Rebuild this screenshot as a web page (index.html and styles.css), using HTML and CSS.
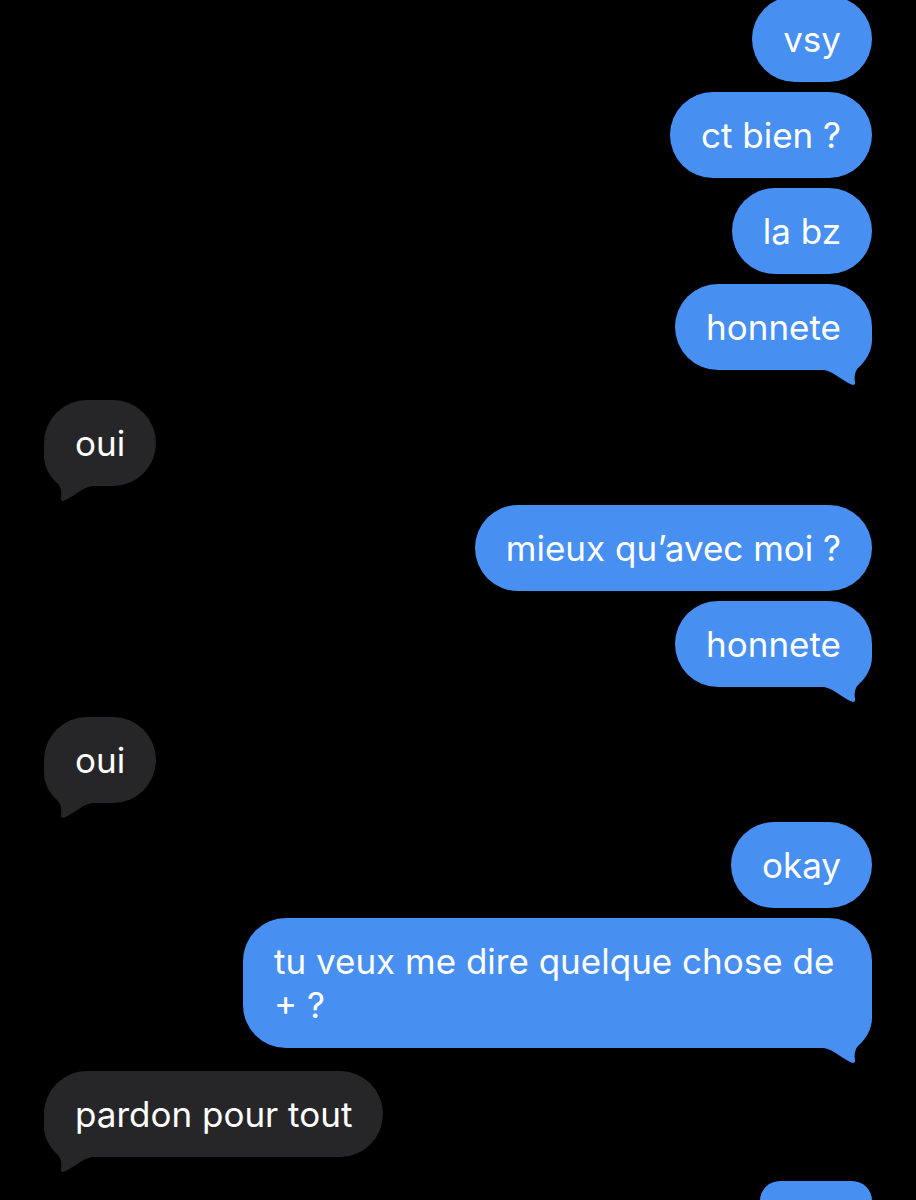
FILE: index.html
```html
<!DOCTYPE html>
<html lang="fr">
<head>
  <meta charset="UTF-8"/>
  <meta name="viewport" content="width=device-width,initial-scale=1.0"/>
  <title>Messages</title>
  <link rel="stylesheet" href="styles.css">
</head>
<body>
  <div class="thread">
    <div class="msg out first"><p class="bubble">vsy</p></div>
    <div class="msg out"><p class="bubble">ct bien ?</p></div>
    <div class="msg out"><p class="bubble">la bz</p></div>
    <div class="msg out"><p class="bubble">honnete<svg class="tail" viewBox="0 0 50 61"><path d="M50 0 L50 13 C50 24 44 34 36 41 C33 44 32 50 33 55 C33.5 57.5 31.5 58.5 29.5 57.5 C21 54 12 45 2 43 L2 0 Z"/></svg></p></div>

    <div class="msg in wide"><p class="bubble">oui<svg class="tail" viewBox="0 0 50 61"><path d="M50 0 L50 13 C50 24 44 34 36 41 C33 44 32 50 33 55 C33.5 57.5 31.5 58.5 29.5 57.5 C21 54 12 45 2 43 L2 0 Z"/></svg></p></div>

    <div class="msg out mid"><p class="bubble">mieux qu’avec moi ?</p></div>
    <div class="msg out"><p class="bubble">honnete<svg class="tail" viewBox="0 0 50 61"><path d="M50 0 L50 13 C50 24 44 34 36 41 C33 44 32 50 33 55 C33.5 57.5 31.5 58.5 29.5 57.5 C21 54 12 45 2 43 L2 0 Z"/></svg></p></div>

    <div class="msg in wide"><p class="bubble">oui<svg class="tail" viewBox="0 0 50 61"><path d="M50 0 L50 13 C50 24 44 34 36 41 C33 44 32 50 33 55 C33.5 57.5 31.5 58.5 29.5 57.5 C21 54 12 45 2 43 L2 0 Z"/></svg></p></div>

    <div class="msg out mid"><p class="bubble">okay</p></div>
    <div class="msg out"><p class="bubble long">tu veux me dire quelque chose de + ?<svg class="tail" viewBox="0 0 50 61"><path d="M50 0 L50 13 C50 24 44 34 36 41 C33 44 32 50 33 55 C33.5 57.5 31.5 58.5 29.5 57.5 C21 54 12 45 2 43 L2 0 Z"/></svg></p></div>

    <div class="msg in gap22"><p class="bubble">pardon pour tout<svg class="tail" viewBox="0 0 50 61"><path d="M50 0 L50 13 C50 24 44 34 36 41 C33 44 32 50 33 55 C33.5 57.5 31.5 58.5 29.5 57.5 C21 54 12 45 2 43 L2 0 Z"/></svg></p></div>

    <div class="msg out gap24"><p class="bubble next"></p></div>
  </div>
</body>
</html>
```

FILE: styles.css
```css
*{margin:0;padding:0;box-sizing:border-box;}
html,body{background:#000;height:100%;overflow:hidden;}
body{font-family:'Inter','Liberation Sans',sans-serif;color:#fff;}
.thread{display:flex;flex-direction:column;padding:0 44px;}
.msg{display:flex;margin-top:10px;}
.msg.first{margin-top:-4px;}
.msg.mid{margin-top:19px;}
.msg.wide{margin-top:30px;}
.msg.gap22{margin-top:23px;}
.msg.gap24{margin-top:24px;}
.out{justify-content:flex-end;}
.in{justify-content:flex-start;}
.bubble{position:relative;z-index:0;font-size:35px;font-weight:400;line-height:44px;padding:21px 31px;border-radius:43px;white-space:nowrap;}
.bubble.long{white-space:normal;width:629px;padding-right:12px;}
.bubble.next{width:112px;height:20px;padding:0;border-radius:43px 43px 0 0;}
.out .bubble{background:#488ff2;}
.in .bubble{background:#262628;}
.tail{position:absolute;z-index:-1;width:50px;height:61px;bottom:-18px;}
.out .tail{right:0;fill:#488ff2;}
.in .tail{left:0;fill:#262628;transform:scaleX(-1);}
```
